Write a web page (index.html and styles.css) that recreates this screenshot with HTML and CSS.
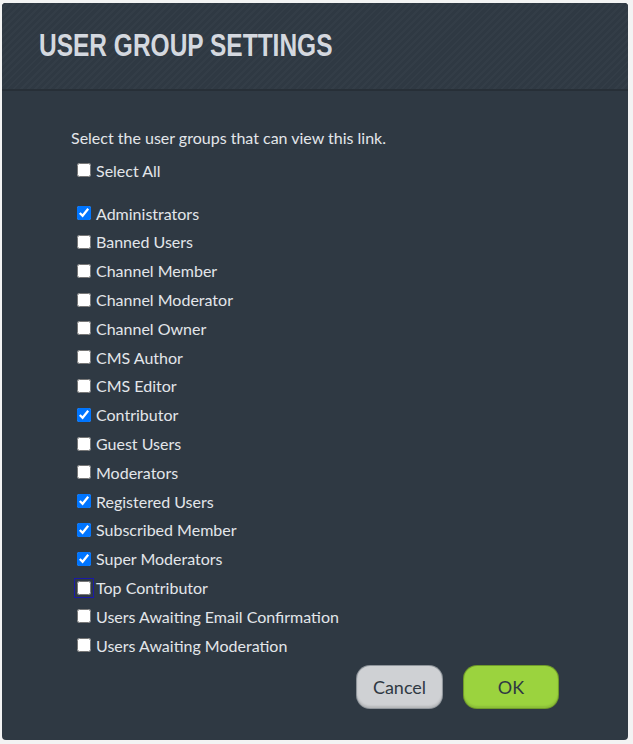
FILE: index.html
```html
<!DOCTYPE html>
<html>
<head>
<meta charset="utf-8">
<link rel="stylesheet" href="styles.css">
</head>
<body>
<div class="dialog">
  <div class="header">
    <h1 class="title">USER GROUP SETTINGS</h1>
  </div>
  <div class="content">
    <p class="intro">Select the user groups that can view this link.</p>
    <label class="row select-all"><input type="checkbox"><span>Select All</span></label>
    <div class="list">
      <label class="row"><input type="checkbox" checked><span>Administrators</span></label>
      <label class="row"><input type="checkbox"><span>Banned Users</span></label>
      <label class="row"><input type="checkbox"><span>Channel Member</span></label>
      <label class="row"><input type="checkbox"><span>Channel Moderator</span></label>
      <label class="row"><input type="checkbox"><span>Channel Owner</span></label>
      <label class="row"><input type="checkbox"><span>CMS Author</span></label>
      <label class="row"><input type="checkbox"><span>CMS Editor</span></label>
      <label class="row"><input type="checkbox" checked><span>Contributor</span></label>
      <label class="row"><input type="checkbox"><span>Guest Users</span></label>
      <label class="row"><input type="checkbox"><span>Moderators</span></label>
      <label class="row"><input type="checkbox" checked><span>Registered Users</span></label>
      <label class="row"><input type="checkbox" checked><span>Subscribed Member</span></label>
      <label class="row"><input type="checkbox" checked><span>Super Moderators</span></label>
      <label class="row"><input type="checkbox" class="focused"><span>Top Contributor</span></label>
      <label class="row"><input type="checkbox"><span>Users Awaiting Email Confirmation</span></label>
      <label class="row"><input type="checkbox"><span>Users Awaiting Moderation</span></label>
    </div>
    <div class="actions">
      <button class="btn btn-cancel">Cancel</button>
      <button class="btn btn-ok">OK</button>
    </div>
  </div>
</div>
</body>
</html>
```
FILE: styles.css
```css
html, body {
  margin: 0;
  padding: 0;
}
body {
  background: #f3f3f3;
  width: 633px;
  height: 744px;
  overflow: hidden;
  padding-top: 3px;
  padding-left: 2px;
  box-sizing: border-box;
}
.dialog {
  width: 626px;
  height: 737px;
  background: #2f3943;
  border-radius: 4px;
  overflow: hidden;
  font-family: Lato, "Open Sans", sans-serif;
  color: #e3e6ea;
}
.header {
  height: 86px;
  border-bottom: 2px solid #272f37;
  background-color: #2f3943;
  background-image: repeating-linear-gradient(135deg, #2f3943 0px, #2f3943 3px, #333d47 3px, #333d47 5px);
  display: flex;
  align-items: center;
  padding-left: 37px;
}
.title {
  margin: 0;
  margin-top: -1px;
  font-family: "Liberation Sans", Arial, sans-serif;
  font-weight: bold;
  font-size: 31px;
  color: #d4d8df;
  transform: scaleX(0.79);
  transform-origin: left center;
  white-space: nowrap;
}
.content {
  padding: 37px 0 0 69px;
}
.intro {
  margin: 0 0 8px 0;
  font-size: 16px;
  line-height: 20px;
}
.row {
  display: flex;
  align-items: center;
  height: 28.8px;
  font-size: 16px;
  padding-left: 6px;
}
.row input {
  width: 14px;
  height: 14px;
  margin: 0 5px 0 0;
}
.row input.focused {
  outline: 1px solid #1a1aa8;
  outline-offset: 2px;
}
.select-all {
  margin-bottom: 14px;
}
.actions {
  display: flex;
  justify-content: flex-end;
  gap: 22px;
  padding-right: 70px;
  margin-top: 6px;
}
.btn {
  font-family: Lato, sans-serif;
  font-size: 18px;
  color: #2f3943;
  height: 42px;
  border-radius: 13px;
  border: none;
  cursor: pointer;
}
.btn-cancel {
  width: 85px;
  background: #cfd1d4;
  box-shadow: 0 0 0 1px #8f959b, inset 0 -2px 2px rgba(0,0,0,0.12);
}
.btn-ok {
  width: 94px;
  background: #9bd33e;
  box-shadow: 0 0 0 1px #6f9a2a, inset 0 -2px 2px rgba(0,0,0,0.1);
}
```
